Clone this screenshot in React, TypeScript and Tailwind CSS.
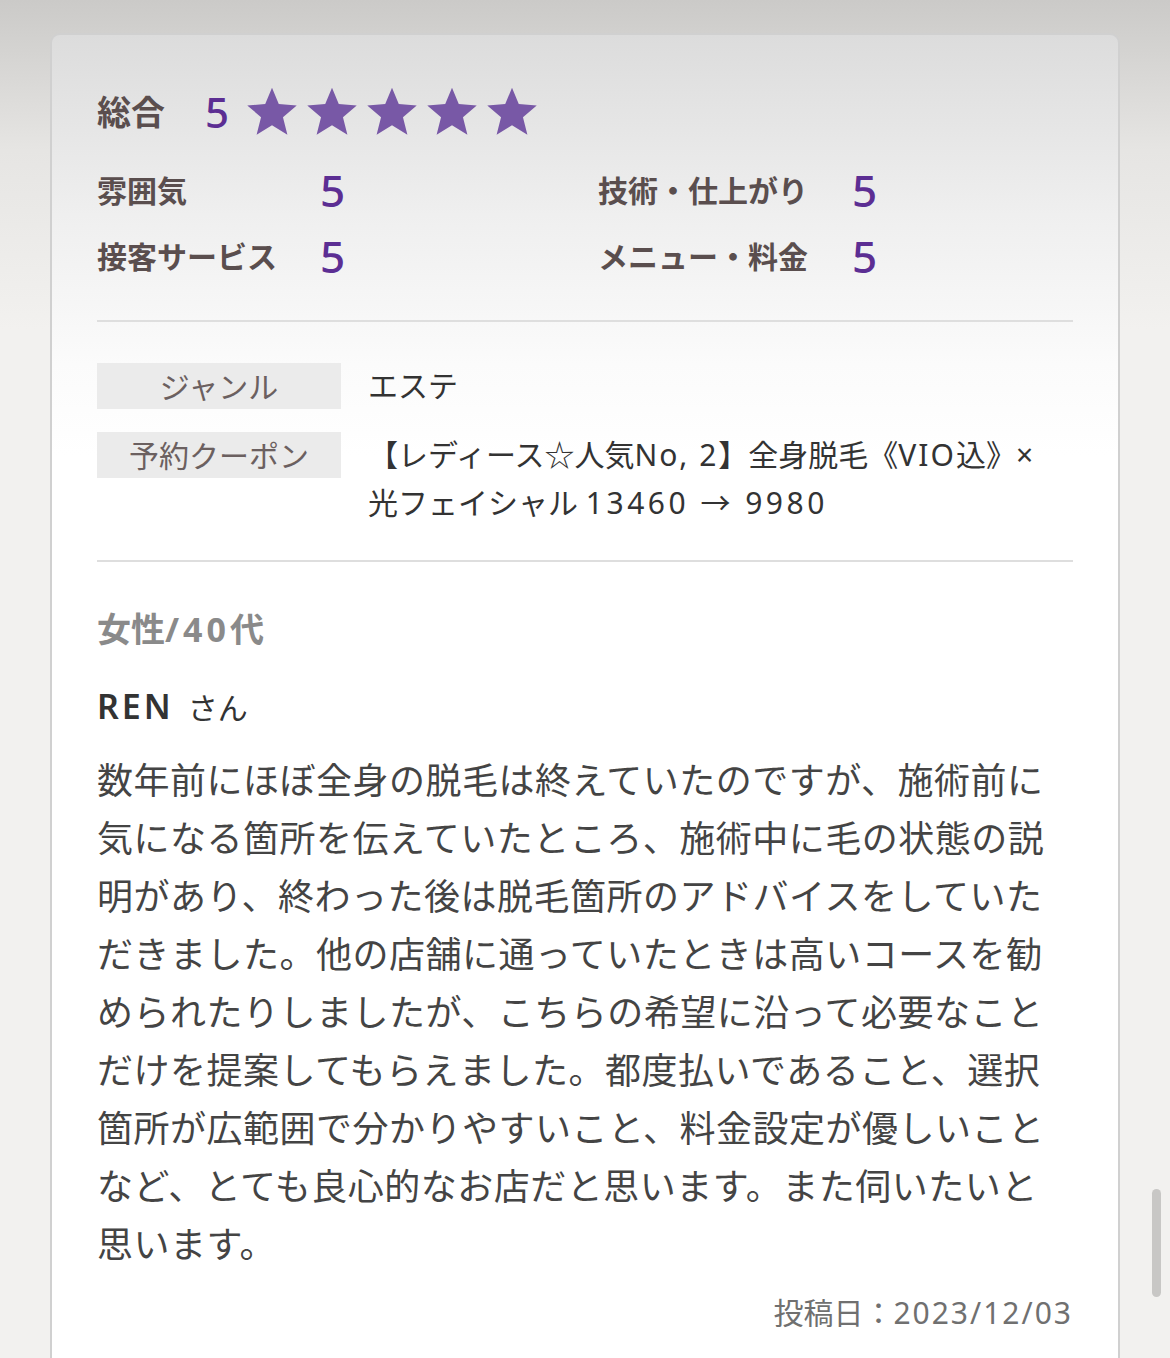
import React from 'react';

const Star = () => (
  <svg viewBox="0 0 24 24" className="h-[56px] w-[58px] -mx-[2px]" aria-hidden>
    <polygon
      points="12,1.6 14.9,8.6 22.6,9.2 16.7,14.2 18.6,21.8 12,17.7 5.4,21.8 7.3,14.2 1.4,9.2 9.1,8.6"
      fill="#7858a6"
    />
  </svg>
);

const ratings = [
  { label: '雰囲気', value: 5, label2: '技術・仕上がり', value2: 5 },
  { label: '接客サービス', value: 5, label2: 'メニュー・料金', value2: 5 },
];

const body =
  '数年前にほぼ全身の脱毛は終えていたのですが、施術前に気になる箇所を伝えていたところ、施術中に毛の状態の説明があり、終わった後は脱毛箇所のアドバイスをしていただきました。他の店舗に通っていたときは高いコースを勧められたりしましたが、こちらの希望に沿って必要なことだけを提案してもらえました。都度払いであること、選択箇所が広範囲で分かりやすいこと、料金設定が優しいことなど、とても良心的なお店だと思います。また伺いたいと思います。';

export default function App() {
  return (
    <div
      className="relative h-[1358px] overflow-hidden bg-[linear-gradient(180deg,#cbcac8_0px,#e6e5e3_150px,#f2f1ef_330px)] pt-[33px] pl-[50px] pr-[50px]"
      style={{ fontFamily: '"Noto Sans", "Noto Sans CJK JP", sans-serif' }}
    >
      <div className="h-[1400px] rounded-t-[10px] border-2 border-b-0 border-[#d0d0d0] bg-[linear-gradient(180deg,#dcdcdc_0px,#efefef_180px,#fbfbfb_330px,#ffffff_420px)] px-[45px] pt-[51px]">
        {/* total */}
        <div className="flex h-[52px] items-center">
          <span className="text-[34px] font-bold text-[#5a4e4e]">総合</span>
          <span className="ml-[40px] text-[42px] font-medium leading-none text-[#5c2e93]">5</span>
          <div className="ml-[16px] flex items-center gap-[6px]">
            <Star />
            <Star />
            <Star />
            <Star />
            <Star />
          </div>
        </div>

        {/* sub ratings */}
        <div className="mt-[19px] grid grid-cols-[223px_278px_254px_1fr]">
          {ratings.map((r) => (
            <React.Fragment key={r.label}>
              <div className="flex h-[66px] items-center text-[30px] font-bold text-[#5a4e4e]">{r.label}</div>
              <div className="flex h-[66px] items-center text-[44px] font-medium leading-none text-[#5c2e93]">{r.value}</div>
              <div className="flex h-[66px] items-center text-[30px] font-bold text-[#5a4e4e]">{r.label2}</div>
              <div className="flex h-[66px] items-center text-[44px] font-medium leading-none text-[#5c2e93]">{r.value2}</div>
            </React.Fragment>
          ))}
        </div>

        <div className="mt-[31px] h-[2px] bg-[#dedede]" />

        {/* genre / coupon */}
        <div className="mt-[40px] flex items-center gap-[27px]">
          <div className="flex h-[46px] w-[244px] shrink-0 items-center justify-center bg-[#ebebeb] text-[30px] text-[#6b6060]">
            ジャンル
          </div>
          <div className="text-[30px] leading-[48px] text-[#333]">エステ</div>
        </div>
        <div className="mt-[22px] flex items-start gap-[27px]">
          <div className="flex h-[46px] w-[244px] shrink-0 items-center justify-center bg-[#ebebeb] text-[30px] text-[#6b6060]">
            予約クーポン
          </div>
          <div className="-mt-px whitespace-nowrap text-[30px] leading-[48px] text-[#333]">
            【レディース☆人気<span className="tracking-[2px]">No, 2</span>】全身脱毛《<span className="tracking-[2px]">VIO</span>込》×
            <br />
            光フェイシャル <span className="tracking-[3.5px]">13460 → 9980</span>
          </div>
        </div>

        <div className="mt-[33px] h-[2px] bg-[#dedede]" />

        {/* reviewer */}
        <div className="mt-[43px] text-[34px] font-bold leading-[48px] text-[#8a8a8a]">
          女性<span className="tracking-[4px]">/40</span>代
        </div>
        <div className="mt-[29px] flex items-baseline gap-[14px] leading-[48px] text-[#333]">
          <span className="text-[34px] font-semibold tracking-[3px]">REN</span>
          <span className="text-[30px]">さん</span>
        </div>

        <p className="mt-[20px] text-[36px] leading-[58px] tracking-[0.5px] text-[#444]">{body}</p>

        <div className="mt-[19px] text-right text-[30px] leading-[40px] text-[#707070]">
          投稿日：<span className="tracking-[2px]">2023/12/03</span>
        </div>
      </div>

      {/* scrollbar */}
      <div className="absolute right-[9px] top-[1189px] h-[108px] w-[9px] rounded-full bg-[#c8c7c5]" />
    </div>
  );
}
